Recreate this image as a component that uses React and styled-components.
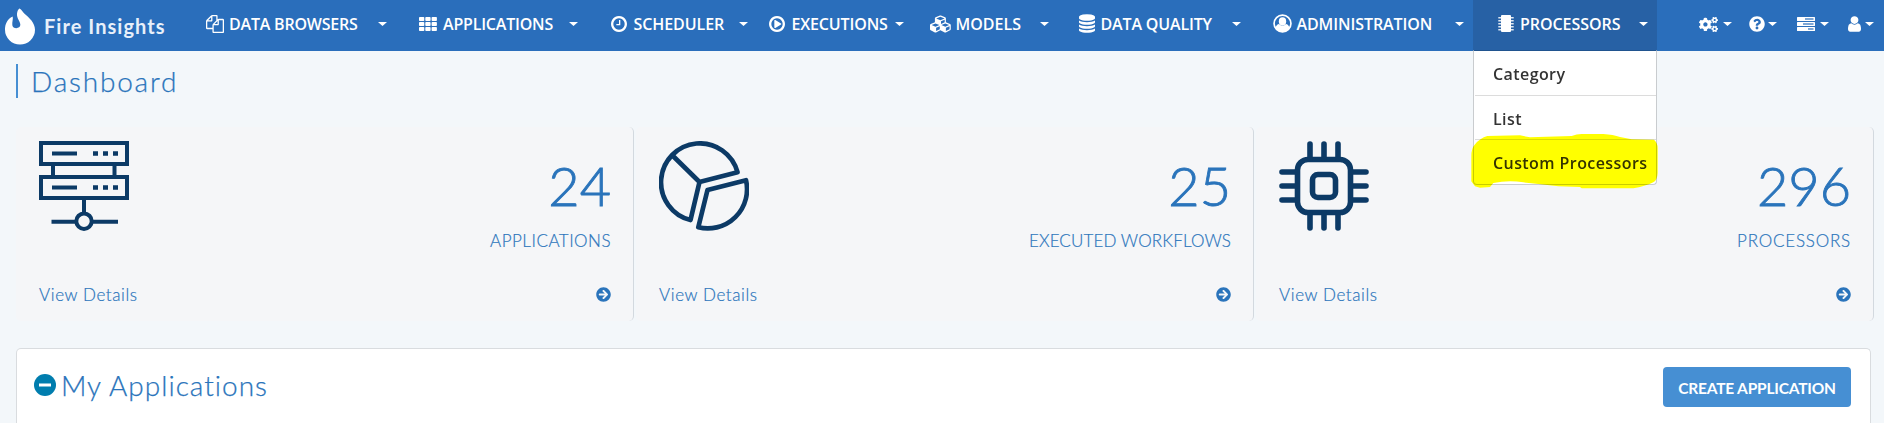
import React from 'react';
import styled, { createGlobalStyle } from 'styled-components';
import { FaCogs, FaQuestionCircle, FaArrowCircleRight } from 'react-icons/fa';

const GlobalStyle = createGlobalStyle`
  * { box-sizing: border-box; }
  body {
    margin: 0;
    background: #f3f7fa;
    color: #2a74bb;
    font-family: Lato, "Liberation Sans", sans-serif;
  }
`;

/* ---------- Navigation ---------- */

const Navbar = styled.nav`
  display: flex;
  height: 51px;
  background: #2a6ebb;
  color: #fff;
`;

const Brand = styled.div`
  display: flex;
  align-items: flex-start;
  width: 206px;
  padding: 8px 0 0 5px;
`;

const BrandName = styled.span`
  margin: 5px 0 0 9px;
  font-size: 20px;
  font-weight: 700;
  line-height: 26px;
  letter-spacing: 1.05px;
  white-space: nowrap;
  color: #e8f0fa;
`;

const NavItem = styled.div`
  position: relative;
  display: flex;
  align-items: center;
  flex: none;
  width: ${(p) => p.$width}px;
  height: 51px;
  padding: 0 ${(p) => p.$after}px 3px ${(p) => p.$before || 0}px;
  background: ${(p) => (p.$active ? '#2761a5' : 'transparent')};
`;

const NavIcon = styled.span`
  display: flex;
  align-items: center;
  flex: none;
  width: ${(p) => p.$width}px;
  height: 20px;
  padding-bottom: 1px;
  svg { display: block; flex: none; }
`;

const NavLabel = styled.span`
  font: 600 16px/22px "Open Sans", "Noto Sans", sans-serif;
  letter-spacing: ${(p) => p.$tracking}px;
  white-space: nowrap;
`;

const Caret = styled.span`
  width: 9px;
  height: 4px;
  margin-left: auto;
  background: #fff;
  clip-path: polygon(0 0, 100% 0, 50% 100%);
`;

const Menu = styled.div`
  position: absolute;
  top: 50px;
  left: 0;
  z-index: 2;
  width: 184px;
  background: #fff;
  border: 1px solid #c9cccf;
  border-top-color: #20548f;
  border-radius: 0 0 4px 4px;
`;

const MenuItem = styled.div`
  height: 44px;
  margin-left: 1px;
  padding: 1px 0 0 18px;
  border-bottom: 1px solid #dcdcdc;
  color: #333;
  font: 600 16px/44px "Open Sans", "Noto Sans", sans-serif;
  letter-spacing: 0.42px;
  white-space: nowrap;
  &:first-of-type { height: 45px; }
  &:last-of-type { border-bottom: 0; }
`;

const Marker = styled.svg`
  position: absolute;
  left: -4px;
  top: 82px;
  width: 190px;
  height: 56.7px;
  fill: #ff0;
  mix-blend-mode: multiply;
`;

/* ---------- Page ---------- */

const PageTitle = styled.h1`
  width: 300px;
  height: 34px;
  margin: 13px 0 0 16px;
  padding-left: 13px;
  border-left: 2px solid #468fd3;
  font-size: 28px;
  font-weight: 300;
  line-height: 34px;
  letter-spacing: 1.8px;
  -webkit-text-stroke: 0.25px currentColor;
`;

const Cards = styled.section`
  display: grid;
  grid-template-columns: repeat(3, 618px);
  gap: 2px;
  margin: 29px 0 0 16px;
`;

const Card = styled.article`
  height: 194px;
  padding: 14px 22px 0 23px;
  background: #f5f6f8;
  border-right: 1px solid #d3d9df;
  border-radius: 5px;
`;

const CardTop = styled.div`
  display: flex;
  justify-content: space-between;
  height: 143px;
`;

const Stat = styled.div`
  display: flex;
  flex-direction: column;
  align-items: flex-end;
  padding-top: 18px;
`;

const StatValue = styled.span`
  font-size: 54px;
  font-weight: 300;
  line-height: 54px;
  -webkit-text-stroke: 0.9px currentColor;
`;

const StatLabel = styled.span`
  margin-top: 18px;
  font-size: 17px;
  font-weight: 300;
  line-height: 20px;
  letter-spacing: ${(p) => p.$tracking}px;
  -webkit-text-stroke: 0.2px currentColor;
`;

const CardFooter = styled.div`
  display: flex;
  align-items: center;
  justify-content: space-between;
  height: 20px;
  font-size: 17px;
  font-weight: 300;
  letter-spacing: 0.6px;
  -webkit-text-stroke: 0.2px currentColor;
`;

const Panel = styled.section`
  display: flex;
  align-items: flex-start;
  justify-content: space-between;
  width: 1855px;
  height: 75px;
  margin: 27px 0 0 16px;
  padding: 18px 19px 0 17px;
  background: #fff;
  border: 1px solid #d9dcdf;
  border-bottom: 0;
  border-radius: 5px 5px 0 0;
`;

const PanelHeading = styled.h2`
  display: flex;
  align-items: center;
  gap: 5px;
  margin: 1px 0 0;
  font-size: 28px;
  font-weight: 300;
  line-height: 34px;
  letter-spacing: 1px;
  -webkit-text-stroke: 0.25px currentColor;
`;

const CreateButton = styled.button`
  width: 188px;
  height: 40px;
  padding: 2px 0 0;
  border: 0;
  border-radius: 4px;
  background: #468fd3;
  color: #fff;
  font: 700 15.5px Lato, sans-serif;
  letter-spacing: -0.2px;
  white-space: nowrap;
`;

/* ---------- Icons ---------- */

const Glyph = ({ d, w, h = 18, box = '0 0 1792 1792' }) => (
  <svg width={w} height={h} viewBox={box} fill="currentColor" preserveAspectRatio="xMidYMid meet"><path d={d} /></svg>
);

const FilesIcon = () => <Glyph w={18} d="M1696 384q40 0 68 28t28 68v1216q0 40-28 68t-68 28h-960q-40 0-68-28t-28-68v-288h-544q-40 0-68-28t-28-68v-672q0-40 20-88t48-76l408-408q28-28 76-48t88-20h416q40 0 68 28t28 68v328q68-40 128-40h416zm-544 213l-299 299h299v-299zm-640-384l-299 299h299v-299zm196 647l316-316v-416h-384v416q0 40-28 68t-68 28h-416v640h512v-256q0-40 20-88t48-76zm956 804v-1152h-384v416q0 40-28 68t-68 28h-416v640h896z" />;
const ClockIcon = () => <Glyph w={16} h={16} box="128 128 1536 1536" d="M1024 544v448q0 14-9 23t-23 9h-320q-14 0-23-9t-9-23v-64q0-14 9-23t23-9h224v-352q0-14 9-23t23-9h64q14 0 23 9t9 23zm416 352q0-148-73-273t-198-198-273-73-273 73-198 198-73 273 73 273 198 198 273 73 273-73 198-198 73-273zm224 0q0 209-103 385.5t-279.500 279.500-385.500 103-385.500-103-279.500-279.500-103-385.500 103-385.500 279.500-279.500 385.500-103 385.500 103 279.500 279.500 103 385.500z" />;
const PlayIcon = () => <Glyph w={16} h={16} box="128 128 1536 1536" d="M1312 896q0 37-32 55l-544 320q-15 9-32 9-16 0-32-8-32-19-32-56v-640q0-37 32-56 33-18 64 1l544 320q32 18 32 55zm128 0q0-148-73-273t-198-198-273-73-273 73-198 198-73 273 73 273 198 198 273 73 273-73 198-198 73-273zm224 0q0 209-103 385.500t-279.500 279.500-385.500 103-385.500-103-279.500-279.500-103-385.500 103-385.500 279.500-279.500 385.500-103 385.500 103 279.500 279.500 103 385.500z" />;
const CubesIcon = () => <Glyph w={22} h={18} box="0 0 2304 1792" d="M640 1632l384-192v-314l-384 164v342zm-64-454l404-173-404-173-404 173zm1088 454l384-192v-314l-384 164v342zm-64-454l404-173-404-173-404 173zm-448-293l384-165v-266l-384 164v267zm-64-379l441-189-441-189-441 189zm1088 518v416q0 36-19 67t-52 47l-448 224q-25 14-57 14t-57-14l-448-224q-4-2-7-4-2 2-7 4l-448 224q-25 14-57 14t-57-14l-448-224q-33-16-52-47t-19-67v-416q0-38 21.500-70t56.500-48l434-186v-400q0-38 21.500-70t56.500-48l448-192q23-10 50-10t50 10l448 192q35 16 56.500 48t21.500 70v400l434 186q36 16 57 48t21 70z" />;
const DatabaseIcon = () => <Glyph w={16} h={19} box="128 0 1536 1792" d="M896 768q237 0 443-43t325-127v170q0 69-103 128t-280 93.500-385 34.500-385-34.500-280-93.500-103-128v-170q119 84 325 127t443 43zm0 768q237 0 443-43t325-127v170q0 69-103 128t-280 93.500-385 34.500-385-34.500-280-93.500-103-128v-170q119 84 325 127t443 43zm0-384q237 0 443-43t325-127v170q0 69-103 128t-280 93.500-385 34.500-385-34.500-280-93.500-103-128v-170q119 84 325 127t443 43zm0-1152q208 0 385 34.500t280 93.500 103 128v128q0 69-103 128t-280 93.500-385 34.500-385-34.500-280-93.500-103-128v-128q0-69 103-128t280-93.500 385-34.500z" />;
const UserIcon = () => <Glyph w={13} h={16} box="256 128 1280 1536" d="M1536 1399q0 109-62.500 187t-150.500 78h-854q-88 0-150.500-78t-62.500-187q0-85 8.500-160.500t31.500-152 58.500-131 94-89 134.500-34.500q131 128 313 128t313-128q76 0 134.500 34.500t94 89 58.500 131 31.500 152 8.500 160.500zm-256-887q0 159-112.500 271.500t-271.500 112.500-271.500-112.500-112.500-271.500 112.500-271.500 271.500-112.500 271.500 112.500 112.500 271.500z" />;

const GridIcon = () => (
  <svg width="18" height="14" viewBox="0 0 18 14" fill="currentColor">
    {[0, 5, 10].map((y) => [0, 6.3, 12.6].map((x) => (
      <rect key={`${x}-${y}`} x={x} y={y} width="5.300" height="4" rx="0.800" />
    )))}
  </svg>
);

const AccountIcon = () => (
  <svg width="19" height="19" viewBox="0 0 18 18" fill="currentColor">
    <circle cx="9" cy="9" r="8" fill="none" stroke="currentColor" strokeWidth="1.600" />
    <ellipse cx="9" cy="7" rx="3.500" ry="3.900" />
    <path d="M2.200 13.200C3.100 10.600 4.300 9.600 5.800 9.500c1.900 1.900 4.500 1.900 6.400 0 1.500.100 2.700 1.100 3.600 3.700C13 18 5 18 2.200 13.200z" />
  </svg>
);

const MicrochipIcon = () => (
  <svg width="16" height="17" viewBox="0 0 16 17" fill="currentColor">
    <rect x="3" y="0" width="10" height="17" rx="1" />
    {[2, 5, 8, 11, 14].map((y) => (
      <React.Fragment key={y}>
        <rect x="0.300" y={y} width="3" height="1.500" opacity="0.850" />
        <rect x="12.700" y={y} width="3" height="1.500" opacity="0.850" />
      </React.Fragment>
    ))}
  </svg>
);

const ServerIcon = () => (
  <svg width="18" height="14" viewBox="0 0 18 14" fill="currentColor">
    {[[0, 8, 8.500], [5, 6, 10.500], [10, 11, 5.500]].map(([y, x, w]) => (
      <React.Fragment key={y}>
        <rect y={y} width="18" height="4" rx="0.500" />
        <rect x={x} y={y + 1.400} width={w} height="1.200" fill="#2a6ebb" />
      </React.Fragment>
    ))}
  </svg>
);

const FlameLogo = () => (
  <svg width="30" height="37" viewBox="15 23 90 110" fill="#fff">
    <path d="M58 24C62 24 66 32 72 38C88 52 105 66 105 88A45 44 0 0 1 15 88C15 70 22 56 38 48C40 56 36 64 37 74C38 86 61 86 61 73C61 62 50 55 51 40C52 32 54 27 58 24Z" />
  </svg>
);

const ServersArt = () => (
  <svg width="90" height="90" viewBox="0 0 90 90" fill="none" stroke="#0c3a66" strokeWidth="4">
    <rect x="2" y="2" width="86" height="21" />
    <rect x="2" y="36" width="86" height="21" />
    <path d="M14 23v13M75.500 23v13M45 57v14M12.500 80.700h24M53 80.700h26M13 12.500h25M13 46.500h25" />
    <path d="M54 12.500h5M64 12.500h5M74 12.500h5M54 46.500h5M64 46.500h5M74 46.500h5" strokeWidth="4.500" />
    <circle cx="45" cy="80.200" r="7.700" />
  </svg>
);

const PieArt = () => (
  <svg width="90" height="90" viewBox="0 0 90 90" fill="none" stroke="#0c3a66" strokeWidth="4.700" strokeLinejoin="round">
    <path d="M40.500 41L78.500 31.200A38.900 38.900 0 1 0 31.500 79L40.500 41L13.500 14.500" />
    <path d="M48.500 49L87 39.200A39.300 39.300 0 0 1 39.300 86.300Z" />
  </svg>
);

const ChipArt = () => (
  <svg width="90" height="90" viewBox="0 0 90 90" fill="none" stroke="#0c3a66" strokeWidth="5.600" strokeLinecap="round">
    <rect x="18.500" y="18.500" width="53" height="53" rx="10.500" />
    <rect x="33.500" y="33.500" width="23" height="23" rx="5.500" />
    <path d="M31 3v15M45 3v15M59 3v15M31 72v15M45 72v15M59 72v15M3 31h15M3 45h15M3 59h15M72 31h15M72 45h15M72 59h15" />
  </svg>
);

const MinusIcon = () => (
  <svg width="22" height="22" viewBox="0 0 22 22">
    <circle cx="11" cy="11" r="11" fill="#007dae" />
    <rect x="5" y="9.500" width="12" height="3" fill="#fff" />
  </svg>
);

/* ---------- Content ---------- */

const mainItems = [
  { label: 'DATA BROWSERS', icon: <FilesIcon />, width: 213, slot: 23, after: 32, tracking: -0.2 },
  { label: 'APPLICATIONS', icon: <GridIcon />, width: 192, slot: 24, after: 33, tracking: -0.2 },
  { label: 'SCHEDULER', icon: <ClockIcon />, width: 158, slot: 22.5, after: 21, tracking: -0.07 },
  { label: 'EXECUTIONS', icon: <PlayIcon />, width: 161, slot: 22.5, after: 26, tracking: -0.15 },
  { label: 'MODELS', icon: <CubesIcon />, width: 148.5, slot: 25.5, after: 29.5, tracking: 0 },
  { label: 'DATA QUALITY', icon: <DatabaseIcon />, width: 194.5, slot: 22, after: 32, tracking: -0.15 },
  { label: 'ADMINISTRATION', icon: <AccountIcon />, width: 200, slot: 23.5, after: 9, tracking: -0.1 },
  { label: 'PROCESSORS', icon: <MicrochipIcon />, width: 184, slot: 22, before: 25, after: 9, tracking: -0.05, menu: ['Category', 'List', 'Custom Processors'] },
];

const toolItems = [
  { icon: <FaCogs size={19} />, width: 50, after: 17 },
  { icon: <FaQuestionCircle size={16} />, width: 48, after: 20 },
  { icon: <ServerIcon />, width: 51, after: 19 },
  { icon: <UserIcon />, width: 36, after: 10 },
];

const stats = [
  { value: '24', label: 'APPLICATIONS', tracking: 0.5, art: <ServersArt /> },
  { value: '25', label: 'EXECUTED WORKFLOWS', tracking: 0.13, art: <PieArt /> },
  { value: '296', label: 'PROCESSORS', tracking: 0.8, art: <ChipArt /> },
];

const Tools = styled.div`
  display: flex;
  margin-left: 42px;
`;

export default function App() {
  return (
    <>
      <GlobalStyle />
      <Navbar>
        <Brand>
          <FlameLogo />
          <BrandName>Fire Insights</BrandName>
        </Brand>
        {mainItems.map((item) => (
          <NavItem key={item.label} $width={item.width} $before={item.before} $after={item.after} $active={!!item.menu}>
            <NavIcon $width={item.slot}>{item.icon}</NavIcon>
            <NavLabel $tracking={item.tracking}>{item.label}</NavLabel>
            <Caret />
            {item.menu && (
              <Menu>
                {item.menu.map((entry) => <MenuItem key={entry}>{entry}</MenuItem>)}
                <Marker viewBox="120 400 570 170">
                  <path d="M124 470Q124 445 134 435Q150 415 172 409L270 407L300 413L425 409Q440 403 455 403H520Q550 405 570 412L605 419L672 420Q683 430 683 445V520Q682 542 670 548Q645 560 610 566H455L450 562L385 560Q330 553 280 548Q235 541 190 550L180 562L150 564L135 560L124 545Z" />
                </Marker>
              </Menu>
            )}
          </NavItem>
        ))}
        <Tools>
          {toolItems.map((item, i) => (
            <NavItem key={i} $width={item.width} $after={item.after}>
              {item.icon}
              <Caret />
            </NavItem>
          ))}
        </Tools>
      </Navbar>

      <PageTitle>Dashboard</PageTitle>

      <Cards>
        {stats.map((stat) => (
          <Card key={stat.label}>
            <CardTop>
              {stat.art}
              <Stat>
                <StatValue>{stat.value}</StatValue>
                <StatLabel $tracking={stat.tracking}>{stat.label}</StatLabel>
              </Stat>
            </CardTop>
            <CardFooter>
              <span>View Details</span>
              <FaArrowCircleRight size={15} />
            </CardFooter>
          </Card>
        ))}
      </Cards>

      <Panel>
        <PanelHeading>
          <MinusIcon />
          My Applications
        </PanelHeading>
        <CreateButton>CREATE APPLICATION</CreateButton>
      </Panel>
    </>
  );
}
